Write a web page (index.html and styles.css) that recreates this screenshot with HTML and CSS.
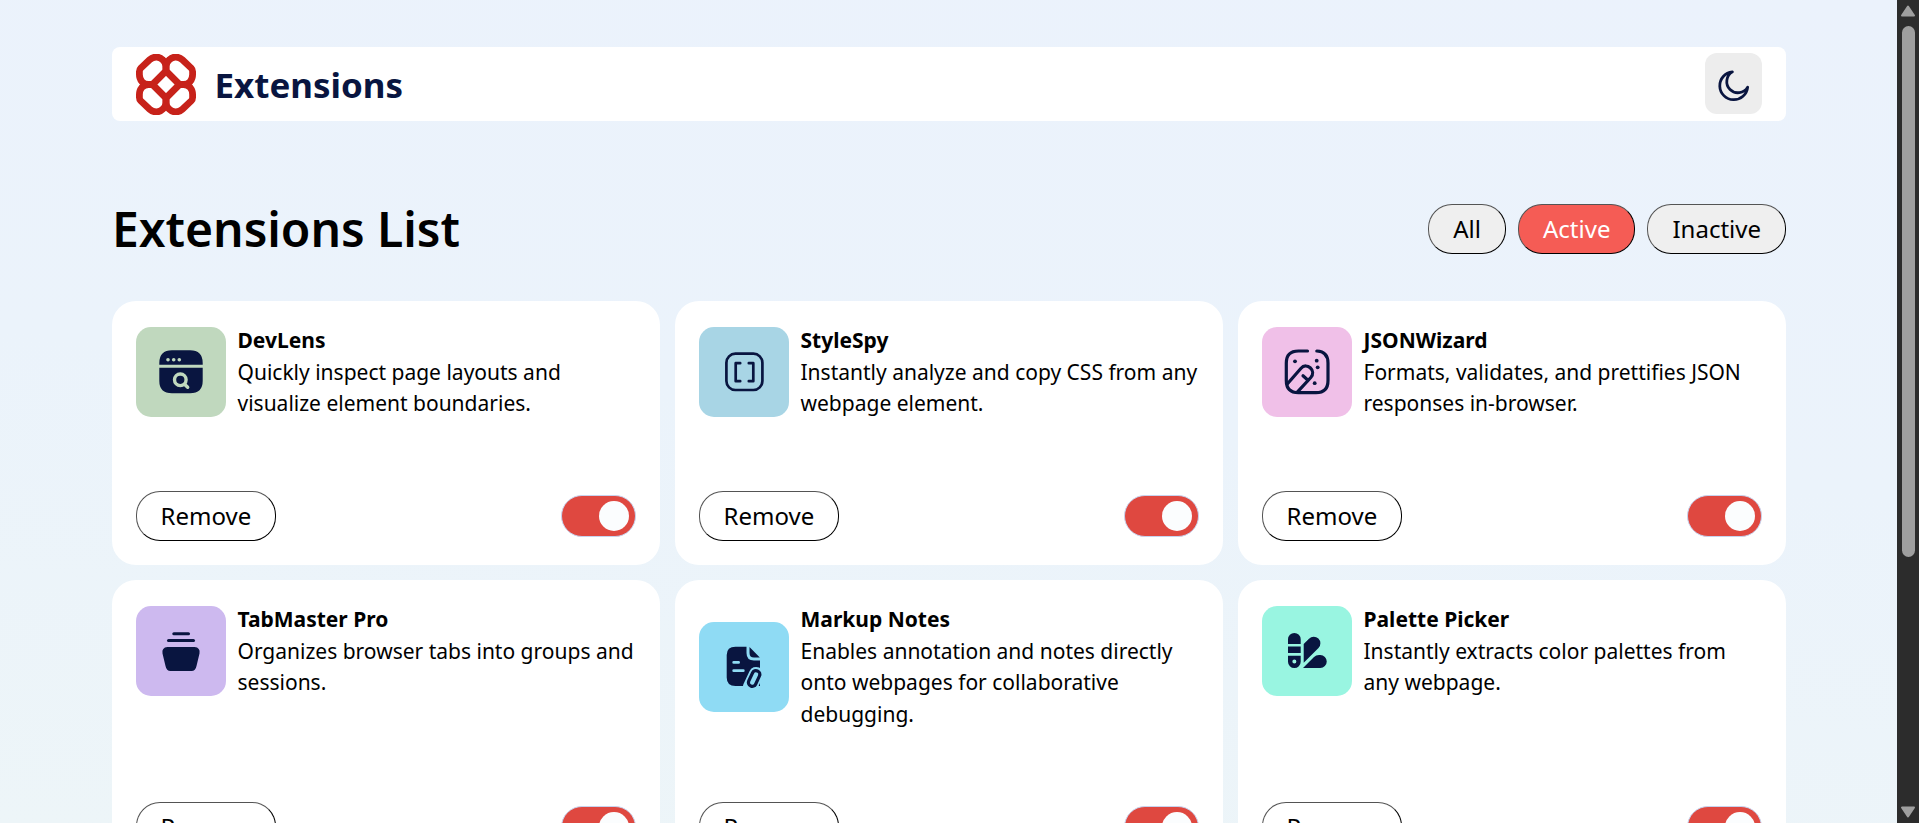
FILE: index.html
```html
<!DOCTYPE html>
<html lang="en">
<head>
<meta charset="utf-8">
<title>Extensions</title>
<link rel="stylesheet" href="styles.css">
</head>
<body>
<div class="window">
<div class="page">
  <header class="header">
    <div class="brand">
      <svg class="brand-mark" viewBox="0 0 60 61" fill="none" stroke="#c7221a" stroke-width="6.8">
        <defs><path id="petal" d="M3.4 20.500V17.500Q3.400 15.500 4.800 14.100L13.600 5.800C18 1.800 23.500 2.600 26.500 5.600Q30 8.500 30 12.500V17L16.500 30.500H12.500Q8.500 30.500 5.800 27.500Q3.400 24.500 3.400 20.500Z"/></defs>
        <use href="#petal"/>
        <use href="#petal" transform="matrix(-1 0 0 1 60 0)"/>
        <use href="#petal" transform="matrix(1 0 0 -1 0 61)"/>
        <use href="#petal" transform="matrix(-1 0 0 -1 60 61)"/>
      </svg>
      <svg class="brand-name" viewBox="0 0 190 61"><text x="-1.500" y="43.500" textLength="188.500" lengthAdjust="spacingAndGlyphs">Extensions</text></svg>
    </div>
    <button class="theme" aria-label="Toggle theme">
      <svg viewBox="0 0 22 22" fill="none" stroke="#091540" stroke-width="1.833" stroke-linecap="round" stroke-linejoin="round"><path d="M20.125 11.877A7.333 7.333 0 1 1 10.124 1.875a9.168 9.168 0 1 0 10.001 10.002Z"/></svg>
    </button>
  </header>

  <section class="toolbar">
    <h1>Extensions List</h1>
    <div class="filters">
      <button class="pill">All</button>
      <button class="pill pill-active">Active</button>
      <button class="pill">Inactive</button>
    </div>
  </section>

  <main class="grid">
    <article class="card">
      <div class="info">
        <svg class="icon devlens" viewBox="0 0 90 90">
          <path fill="#091540" d="M23.300 37.700V36Q23.300 23.300 36 23.300H54Q66.700 23.300 66.700 36V37.700ZM23.300 40.800H66.700V54Q66.700 66.300 54 66.300H36Q23.300 66.300 23.300 54Z"/>
          <g fill="#c0d8be"><circle cx="32" cy="32.700" r="1.800"/><circle cx="37.700" cy="32.700" r="1.800"/><circle cx="43.300" cy="32.700" r="1.800"/></g>
          <g fill="none" stroke="#c0d8be" stroke-width="3.400" stroke-linecap="round"><circle cx="44.300" cy="52.800" r="5.800"/><path d="M48.500 57.200L51.700 60.300"/></g>
        </svg>
        <div class="copy"><h2>DevLens</h2><p>Quickly inspect page layouts and visualize element boundaries.</p></div>
      </div>
      <div class="actions"><button class="pill pill-clear">Remove</button><span class="toggle"></span></div>
    </article>
    <article class="card">
      <div class="info">
        <svg class="icon stylespy" viewBox="0 0 90 90" fill="none" stroke="#091540" stroke-width="2.700" stroke-linecap="round" stroke-linejoin="round">
          <rect x="27.400" y="26.700" width="36" height="36.300" rx="9"/>
          <path d="M41.200 36.200H36.700V54.200H41.200M49.800 36.200H54.300V54.200H49.800"/>
        </svg>
        <div class="copy"><h2>StyleSpy</h2><p>Instantly analyze and copy CSS from any webpage element.</p></div>
      </div>
      <div class="actions"><button class="pill pill-clear">Remove</button><span class="toggle"></span></div>
    </article>
    <article class="card">
      <div class="info">
        <svg class="icon jsonwizard" viewBox="0 0 90 90">
          <g fill="none" stroke="#091540" stroke-width="3.200" stroke-linecap="round" stroke-linejoin="round">
            <path d="M45.500 24H36.500Q24.300 24 24.300 36V53.500Q24.300 65.700 36.500 65.700H54Q66 65.700 66 53.500V36Q66 24.500 54.800 24"/>
            <path d="M25.500 56.800L38.800 41.500C42 37.700 46 38.800 48.200 40.800C51 43.300 51.600 47.300 48.800 50.500L35.300 65.200M41 48.800L46 53.200"/>
          </g>
          <g fill="#091540"><circle cx="33" cy="34.300" r="1.900"/><circle cx="54.700" cy="33.700" r="1.900"/><circle cx="55.700" cy="40.300" r="1.900"/><circle cx="52.700" cy="56.200" r="1.900"/></g>
        </svg>
        <div class="copy"><h2>JSONWizard</h2><p>Formats, validates, and prettifies JSON responses in-browser.</p></div>
      </div>
      <div class="actions"><button class="pill pill-clear">Remove</button><span class="toggle"></span></div>
    </article>
    <article class="card">
      <div class="info">
        <svg class="icon tabmaster" viewBox="0 0 90 90" fill="#091540">
          <rect x="36.300" y="26.200" width="17.700" height="3" rx="1.500"/>
          <rect x="31" y="33" width="28" height="3" rx="1.500"/>
          <path d="M31.500 41H58.500Q64.500 41.500 63.500 47.500L60.500 60Q59.500 65 55.500 65H34.500Q30.500 65 29.500 60L26.500 47.500Q25.500 41.500 31.500 41Z"/>
        </svg>
        <div class="copy"><h2>TabMaster Pro</h2><p>Organizes browser tabs into groups and sessions.</p></div>
      </div>
      <div class="actions"><button class="pill pill-clear">Remove</button><span class="toggle"></span></div>
    </article>
    <article class="card">
      <div class="info">
        <svg class="icon markup" viewBox="0 0 90 90">
          <path fill="#091540" d="M36.500 24.700H47.500V31Q47.500 38.500 55 38.500H61V64H36.500Q27.700 64 27.700 55.500V33Q27.700 24.700 36.500 24.700ZM50.500 25L60.800 35.500H55Q50.500 35.500 50.500 31Z"/>
          <path fill="none" stroke="#8fdbf4" stroke-width="2.800" stroke-linecap="round" d="M34.700 40.400H39.600M34.700 48.700H44.300"/>
          <g transform="rotate(25 55.200 56.300)" fill="none">
            <rect x="49.400" y="46" width="11.600" height="26" rx="5.800" fill="#8fdbf4" stroke="#8fdbf4" stroke-width="3"/>
            <rect x="51.400" y="48.300" width="7.600" height="16.400" rx="3.600" stroke="#091540" stroke-width="3.200"/>
          </g>
        </svg>
        <div class="copy"><h2>Markup Notes</h2><p>Enables annotation and notes directly onto webpages for collaborative debugging.</p></div>
      </div>
      <div class="actions"><button class="pill pill-clear">Remove</button><span class="toggle"></span></div>
    </article>
    <article class="card">
      <div class="info">
        <svg class="icon palette" viewBox="0 0 90 90" fill="#091540">
          <path d="M26 38V33.300A6.350 6.350 0 0 1 38.700 33.300V38ZM26 40.500H38.700V47H26ZM26 49.700H38.700V55.700A6.350 6.350 0 0 1 26 55.700ZM32.350 53.400A2 2 0 1 0 32.350 57.400A2 2 0 1 0 32.350 53.400Z" fill-rule="evenodd"/>
          <path d="M41.700 38L47 32.700A6.600 6.600 0 0 1 56.500 42L41.700 56.800ZM41 62L52 51Q54 49.100 57 49.100H58.300A6.450 6.450 0 0 1 58.300 62Z"/>
        </svg>
        <div class="copy"><h2>Palette Picker</h2><p>Instantly extracts color palettes from any webpage.</p></div>
      </div>
      <div class="actions"><button class="pill pill-clear">Remove</button><span class="toggle"></span></div>
    </article>
  </main>
</div>
<div class="scrollbar">
  <svg viewBox="0 0 22 22"><path d="M11 6.500L17 15.500H5Z"/></svg>
  <div class="track"><div class="thumb"></div></div>
  <svg viewBox="0 0 22 22"><path d="M5 6.500H17L11 15.500Z"/></svg>
</div>
</div>
</body>
</html>
```
FILE: styles.css
```css
* { box-sizing: border-box; margin: 0; padding: 0; }
body { font-family: "Noto Sans", sans-serif; color: #000; overflow: hidden; }
.window { display: flex; height: 823px; overflow: hidden; }
.page {
  flex: 1;
  height: 823px;
  overflow: hidden;
  padding: 47px 111px 0 112px;
  background: linear-gradient(185deg, #ebf2fc, #ebf3fb 50%, #edf5f8);
}
.header {
  display: flex;
  align-items: flex-start;
  justify-content: space-between;
  height: 74px;
  padding: 6px 24px 0;
  border-radius: 8px;
  background: #fff;
}
.brand { display: flex; gap: 20px; padding-top: 0.500px; }
.brand-mark { width: 60px; height: 61px; }
.brand-name { width: 190px; height: 61px; overflow: visible; }
.brand-name text { font: 700 34.500px "Noto Sans", sans-serif; fill: #091540; }
.theme {
  display: flex;
  justify-content: center;
  width: 57px;
  height: 61px;
  padding-top: 16px;
  border: 0;
  border-radius: 12px;
  background: #ededed;
}
.theme svg { width: 33.500px; height: 33.500px; }
.toolbar {
  display: flex;
  align-items: center;
  justify-content: space-between;
  height: 50px;
  margin: 83px 0 47px;
}
h1 { font-size: 48px; font-weight: 600; line-height: 50px; letter-spacing: -0.040px; }
.filters { display: flex; gap: 12px; }
.pill {
  height: 50px;
  padding: 0 24px 2px;
  border: 1px outset #000;
  border-radius: 24px;
  background: #efefef;
  color: #000;
  font: 24px "Noto Sans", sans-serif;
}
.pill-active { background: #f55c55; color: #fff; }
.pill-clear { padding: 0 23.500px 2px; background: transparent; }
.grid { display: grid; grid-template-columns: repeat(3, 548px); gap: 15px; }
.card {
  display: flex;
  flex-direction: column;
  justify-content: space-between;
  min-height: 264px;
  padding: 24px;
  border-radius: 24px;
  background: #fff;
}
.grid .card:nth-child(n+4) { min-height: 296px; }
.info { display: flex; align-items: center; gap: 11.500px; }
.icon { flex: none; width: 90px; height: 90px; border-radius: 15px; }
.devlens { background: #c0d8be; }
.stylespy { background: #a8d5e5; }
.jsonwizard { background: #f0c0e8; }
.tabmaster { background: #cdb9ef; }
.markup { background: #8fdbf4; }
.palette { background: #99f5e1; }
.copy { font-size: 21px; line-height: 31.500px; }
.copy h2 { font-size: 21px; font-weight: 700; }
.actions { display: flex; align-items: center; justify-content: space-between; }
.toggle {
  display: flex;
  align-items: center;
  justify-content: flex-end;
  width: 75px;
  height: 42px;
  padding-right: 6px;
  border: 1px solid #c7d3ee;
  border-radius: 21px;
  background: #df4840;
}
.toggle::after { content: ""; width: 30px; height: 30px; border-radius: 50%; background: #fbfdfe; }
.scrollbar { display: flex; flex-direction: column; width: 22px; background: #2c2c2c; }
.scrollbar svg { width: 22px; height: 22px; fill: #9f9f9f; stroke: #9f9f9f; stroke-width: 2; stroke-linejoin: round; }
.track { flex: 1; padding: 4px 4px 0 5px; }
.thumb { height: 531px; border-radius: 7px; background: #9f9f9f; }
```
